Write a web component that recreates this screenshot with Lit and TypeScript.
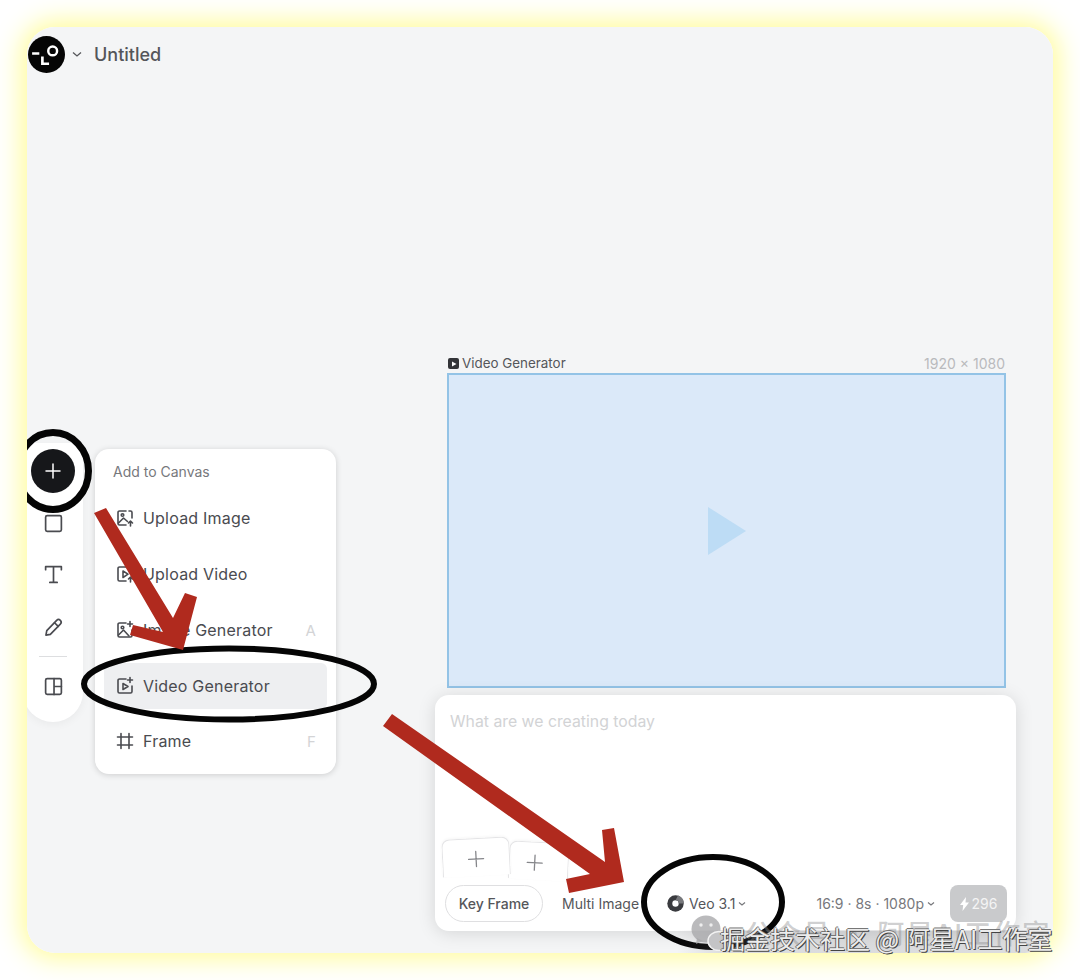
import { LitElement, html, css, svg } from "lit";
import { customElement } from "lit/decorators.js";

const ic = (body: unknown, size = 20, sw = 1.6) => html`<svg class="ic" width=${size} height=${size} viewBox="0 0 20 20" fill="none" stroke="currentColor" stroke-width=${sw} stroke-linecap="round" stroke-linejoin="round">${body}</svg>`;

const menuRows = [
  { label: "Upload Image", key: "", active: false, icon: svg`<path d="M11 3H4.500A1.500 1.500 0 0 0 3 4.500v11A1.500 1.500 0 0 0 4.500 17H11"/><path d="M17 10V4.500A1.500 1.500 0 0 0 15.500 3H14"/><circle cx="7.500" cy="7" r="1.300"/><path d="M3.500 15l5-5 4 3.500"/><path d="M15.500 18v-5M13.500 15l2-2 2 2"/>` },
  { label: "Upload Video", key: "", active: false, icon: svg`<path d="M11 17H4.500A1.500 1.500 0 0 1 3 15.500v-11A1.500 1.500 0 0 1 4.500 3h11A1.500 1.500 0 0 1 17 4.500V10"/><path d="M8 7l5 3.200-5 3.300z"/><path d="M15.500 18v-5M13.500 15l2-2 2 2"/>` },
  { label: "Image Generator", key: "A", active: false, icon: svg`<path d="M11 3H4.500A1.500 1.500 0 0 0 3 4.500v11A1.500 1.500 0 0 0 4.500 17h11a1.500 1.500 0 0 0 1.500-1.500V10"/><circle cx="7.500" cy="7.500" r="1.300"/><path d="M3.500 15l5-5 5.500 6"/><path d="M15 1.500v5M12.500 4h5"/>` },
  { label: "Video Generator", key: "", active: true, icon: svg`<path d="M11 3H4.500A1.500 1.500 0 0 0 3 4.500v11A1.500 1.500 0 0 0 4.500 17h11a1.500 1.500 0 0 0 1.500-1.500V10"/><path d="M8 7.500l5 3-5 3z"/><path d="M15 1.500v5M12.500 4h5"/>` },
  { label: "Frame", key: "F", active: false, icon: svg`<path d="M6 2.500v15M14 2.500v15M2.500 6h15M2.500 14h15"/>` },
];

@customElement("app-root")
export class AppRoot extends LitElement {
  static styles = css`
    :host { display: block; width: 1080px; height: 980px; background: #fff; font-family: Inter, "Noto Sans", sans-serif; padding: 27px; box-sizing: border-box; position: relative; overflow: hidden; }
    .canvas { position: relative; width: 1026px; height: 926px; background: #f4f5f6; border-radius: 28px; overflow: hidden; }
    .glow { position: absolute; left: 27px; top: 27px; width: 1026px; height: 926px; border-radius: 28px; box-shadow: 0 0 26px 6px #fffc9c; }
    .ic { display: block; flex: none; }
    .head { position: absolute; left: 1px; top: 9px; display: flex; align-items: center; gap: 7px; color: #55565a; font-size: 18px; font-weight: 500; }
    .logo { display: block; }
    .head .name { margin-left: 5px; }
    .tools { position: absolute; left: -4px; top: 416px; width: 60px; height: 279px; background: #fff; border-radius: 0 0 30px 30px; box-shadow: 0 2px 10px rgba(0,0,0,.05); display: flex; flex-direction: column; align-items: center; padding-top: 6px; box-sizing: border-box; color: #4a4b50; }
    .plus { width: 44px; height: 44px; border-radius: 50%; background: #16171a; color: #fff; display: flex; align-items: center; justify-content: center; flex: none; }
    .tool { height: 52px; display: flex; align-items: center; justify-content: center; flex: none; }
    .tool.square { height: 54px; margin-top: 3px; }
    .tool.text { height: 48px; }
    .tool.pen { margin-top: 3px; }
    .tools .sep { width: 28px; height: 1px; background: #dddee0; margin: 3px 0 3px; flex: none; }
    .menu { position: absolute; left: 68px; top: 422px; width: 241px; height: 325px; background: #fff; border-radius: 14px; box-shadow: 0 1px 6px rgba(0,0,0,.16); padding: 14px 9px 0; box-sizing: border-box; display: flex; flex-direction: column; }
    .menu .title { font-size: 14px; color: #77787c; padding-left: 9px; height: 18px; line-height: 18px; margin-bottom: 14px; }
    .row { height: 46px; margin-bottom: 10px; display: flex; align-items: center; gap: 9px; padding: 0 11px; border-radius: 6px; font-size: 16px; color: #4a4b50; flex: none; letter-spacing: .2px; }
    .row:last-child { margin-top: -1px; }
    .row > span:first-of-type { margin-left: -1px; }
    .row.active { background: #eeeff1; }
    .row .key { margin-left: auto; color: #d3d4d6; font-size: 15px; }
    .frame-label { position: absolute; left: 421px; top: 328px; width: 557px; height: 17px; line-height: 17px; display: flex; align-items: center; justify-content: space-between; font-size: 13.400px; color: #55565a; }
    .frame-label span.l { display: flex; align-items: center; gap: 3px; }
    .frame-label .dim { color: #b9babd; font-size: 14px; }
    .fi { width: 11px; height: 11px; background: #333438; border-radius: 2px; display: flex; align-items: center; justify-content: center; }
    .frame { position: absolute; left: 420px; top: 346px; width: 559px; height: 315px; box-sizing: border-box; background: #dbe9f9; border: 2px solid #93c3e6; display: flex; align-items: center; justify-content: center; }
    .composer { position: absolute; isolation: isolate; left: 408px; top: 668px; width: 581px; height: 236px; background: #fff; border-radius: 14px; box-shadow: 0 2px 18px rgba(0,0,0,.13); box-sizing: border-box; display: flex; flex-direction: column; padding: 17px 9px 9px; }
    .ph { font-size: 15.800px; color: #d2d3d5; padding-left: 6px; line-height: 20px; }
    .slots { margin-top: auto; display: flex; height: 38px; margin-left: -2px; }
    .slot { width: 68px; height: 38px; background: #fff; border: 1px solid #e4e4e6; border-bottom: none; border-radius: 8px 8px 0 0; box-shadow: 0 -1px 3px rgba(0,0,0,.04); color: #85868a; display: flex; align-items: flex-start; justify-content: center; padding-top: 10px; box-sizing: border-box; flex: none; }
    .slot.a { transform: rotate(-3deg); z-index: 1; position: relative; }
    .slot.b { width: 60px; padding-right: 8px; transform: rotate(3deg) translate(-1px, 4px); }
    .controls { display: flex; align-items: center; height: 37px; margin-top: 9px; color: #55565a; font-size: 14px; position: relative; z-index: 2; }
    .pill { width: 98px; height: 37px; margin-left: 1px; border: 1px solid #dfdfe1; border-radius: 19px; box-sizing: border-box; display: flex; align-items: center; justify-content: center; font-weight: 500; flex: none; }
    .multi { margin-left: 19px; }
    .veo { margin-left: 28px; display: flex; align-items: center; gap: 5px; }
    .veo .ch, .meta .ch { margin-left: -2px; }
    .meta { margin-left: auto; display: flex; align-items: center; gap: 5px; color: #77787c; }
    .go { margin-left: 15px; width: 57px; height: 37px; border-radius: 8px; background: #c9cacc; color: #f4f4f4; display: flex; align-items: center; justify-content: center; gap: 3px; font-size: 14px; flex: none; }
    .marks { position: absolute; left: 0; top: 0; width: 1026px; height: 926px; pointer-events: none; }
    .strip { position: absolute; left: 650px; top: 903px; width: 376px; height: 23px; background: linear-gradient(90deg, rgba(120,120,125,0), rgba(120,120,125,.2) 12%); }
    .wm { position: absolute; left: 0; top: 0; width: 1080px; height: 980px; pointer-events: none; }
    .wm-faint { position: absolute; left: 745px; top: 913px; font: 500 27px "Noto Sans CJK SC", "Noto Sans", sans-serif; color: rgba(140,140,142,.42); white-space: nowrap; letter-spacing: 2px; }
    .wm-main { position: absolute; left: 720px; top: 920px; font: 400 25px/36px "Noto Sans CJK SC", "Noto Sans", sans-serif; color: #ececec; white-space: nowrap; text-shadow: 1px 1px 0 #444, -1px 0 0 #666, 0 -1px 0 #777; }
    .bubble { position: absolute; left: 691px; top: 915px; }
  `;

  render() {
    return html`
      <div class="glow"></div>
      <div class="canvas">
        <div class="head">
          <svg class="logo" width="37" height="37" viewBox="0 0 36 36">
            <circle cx="18" cy="18" r="18" fill="#050505"/>
            <path d="M4 17h7" stroke="#fff" stroke-width="2.600"/>
            <path d="M14 20v7h6.500" stroke="#fff" stroke-width="2.600" fill="none"/>
            <circle cx="24" cy="14.500" r="4.300" stroke="#fff" stroke-width="2.400" fill="none"/>
          </svg>
          <svg width="10" height="7" viewBox="0 0 10 7" fill="none" stroke="#55565a" stroke-width="1.300"><path d="M1 1.500l4 3.500 4-3.500"/></svg>
          <span class="name">Untitled</span>
        </div>

        <div class="tools">
          <div class="plus">${ic(svg`<path d="M10 3v14M3 10h14"/>`, 20, 1.5)}</div>
          <div class="tool square">${ic(svg`<rect x="2.500" y="2.500" width="15" height="15" rx="1.500"/>`, 21)}</div>
          <div class="tool text">${ic(svg`<path d="M2.500 5.500V2.500h15v3M10 2.500v15M6.500 17.500h7"/>`, 21)}</div>
          <div class="tool pen">${ic(svg`<path d="M13 3.200a2 2 0 0 1 3.500 3.500L7 16.500l-4.200.8.800-4.300z"/><path d="M11 5.500l3.500 3.500"/>`, 21)}</div>
          <div class="sep"></div>
          <div class="tool">${ic(svg`<rect x="2.500" y="2.500" width="15" height="15" rx="1.500"/><path d="M10.500 2.500v15M10.500 10h7"/>`, 21)}</div>
        </div>

        <div class="menu">
          <div class="title">Add to Canvas</div>
          ${menuRows.map(r => html`<div class="row ${r.active ? "active" : ""}">${ic(r.icon)}<span>${r.label}</span>${r.key ? html`<span class="key">${r.key}</span>` : ""}</div>`)}
        </div>

        <div class="frame-label">
          <span class="l"><span class="fi"><svg width="6" height="6" viewBox="0 0 6 6"><path d="M1 .5l4.500 2.500L1 5.500z" fill="#fff"/></svg></span>Video Generator</span>
          <span class="dim">1920 × 1080</span>
        </div>
        <div class="frame">
          <svg width="38" height="48" viewBox="0 0 38 48"><path d="M0 0l38 24L0 48z" fill="#bddcf5"/></svg>
        </div>

        <div class="composer">
          <div class="ph">What are we creating today</div>
          <div class="slots">
            <div class="slot a">${ic(svg`<path d="M10 2.500v15M2.500 10h15"/>`, 20, 1.300)}</div>
            <div class="slot b">${ic(svg`<path d="M10 2.500v15M2.500 10h15"/>`, 20, 1.300)}</div>
          </div>
          <div class="controls">
            <div class="pill">Key Frame</div>
            <div class="multi">Multi Image</div>
            <div class="veo">
              <svg width="17" height="17" viewBox="0 0 17 17"><circle cx="8.500" cy="8.500" r="8.200" fill="#3a3b3f"/><circle cx="8.500" cy="8.500" r="3.200" fill="#fff"/><path d="M8.500 5.300a3.200 3.200 0 0 1 3.200 3.200H17A8.500 8.500 0 0 0 11 .5z" fill="#77787c"/></svg>
              <span>Veo 3.1</span>
              <svg class="ch" width="8" height="6" viewBox="0 0 8 6" fill="none" stroke="#77787c" stroke-width="1.200"><path d="M1 1.500l3 2.500 3-2.500"/></svg>
            </div>
            <div class="meta">
              <span>16:9 · 8s · 1080p</span>
              <svg class="ch" width="8" height="6" viewBox="0 0 8 6" fill="none" stroke="#77787c" stroke-width="1.200"><path d="M1 1.500l3 2.500 3-2.500"/></svg>
            </div>
            <div class="go">
              <svg width="9" height="14" viewBox="0 0 9 14"><path d="M6 0L0 8h3.200L2.500 14 9 5.500H5.500z" fill="#fff"/></svg>
              <span>296</span>
            </div>
          </div>
        </div>

        <svg class="marks" viewBox="27 27 1026 926">
          <ellipse cx="53" cy="471" rx="35.500" ry="38.500" fill="none" stroke="#050505" stroke-width="7"/>
          <ellipse cx="229" cy="684" rx="145" ry="35.500" fill="none" stroke="#050505" stroke-width="6"/>
          <ellipse cx="713" cy="902" rx="69" ry="45" fill="none" stroke="#050505" stroke-width="6"/>
          <polygon points="94,513 106,508 173,618 185,593 197,597 183,650 130,635 133,625 163,632" fill="#b02a1e"/>
          <polygon points="392,714 605,862 602,830 614,828 624,882 569,893 566,879 590,874 383,726" fill="#b02a1e"/>
        </svg>
        <div class="strip"></div>
      </div>

      <div class="wm">
        <svg class="bubble" width="48" height="36" viewBox="0 0 48 36">
          <ellipse cx="15" cy="14" rx="14.500" ry="13.500" fill="#a9a9ab" opacity=".8"/>
          <path d="M6 23l-1 6 7-3z" fill="#a9a9ab" opacity=".8"/>
          <circle cx="10" cy="10" r="1.700" fill="#eee"/><circle cx="20" cy="10" r="1.700" fill="#eee"/>
          <ellipse cx="28" cy="26" rx="11" ry="9.500" fill="#c4c4c6" stroke="#f2f2f2" stroke-width="1.500"/>
        </svg>
        <div class="wm-faint">公众号 · 阿星AI工作室</div>
        <div class="wm-main">掘金技术社区 @ 阿星AI工作室</div>
      </div>
    `;
  }
}
